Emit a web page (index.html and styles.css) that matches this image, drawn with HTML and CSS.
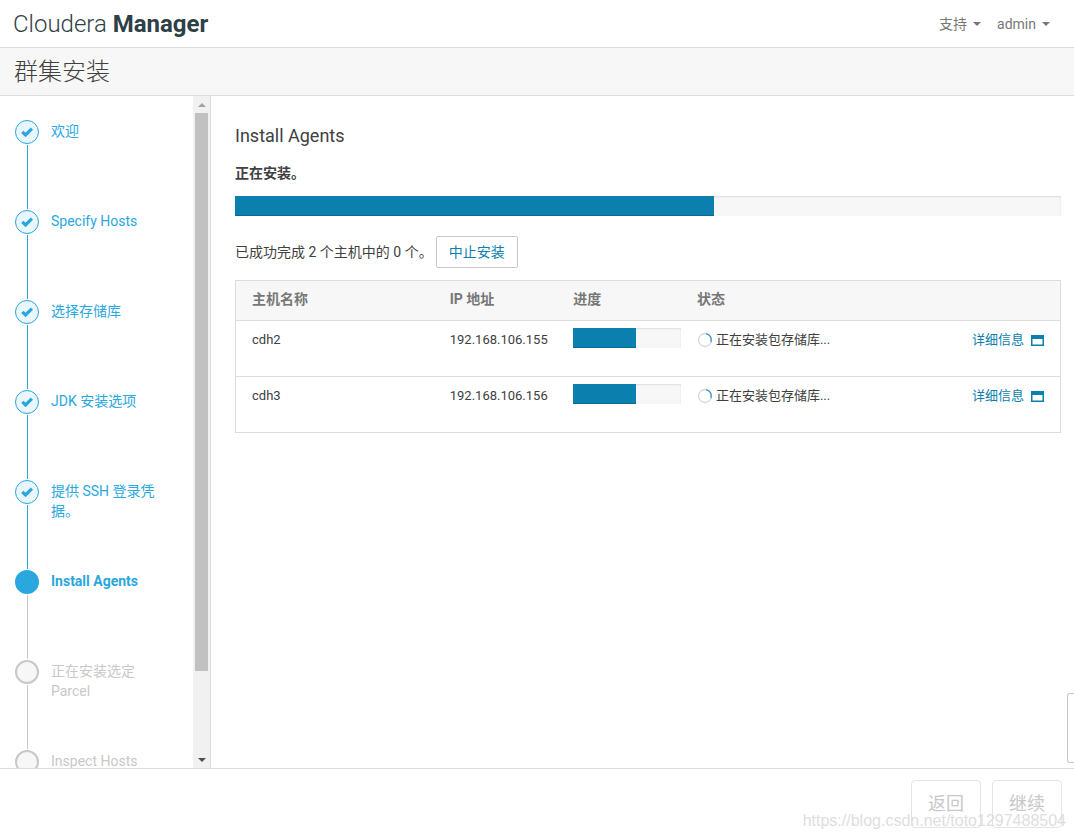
FILE: index.html
```html
<!DOCTYPE html>
<html lang="zh-CN">
<head>
<meta charset="utf-8">
<title>群集安装 - Cloudera Manager</title>
<link rel="stylesheet" href="styles.css">
</head>
<body>
<svg class="defs" aria-hidden="true">
  <symbol id="check" viewBox="0 0 12 10"><path d="M1.300 4.800 4.600 8 10.900 1.700" fill="none" stroke="currentColor" stroke-width="3.200"/></symbol>
  <symbol id="window" viewBox="0 0 13 11"><path d="M0 0h13v11H0zM1.500 4v5.500h10V4z" fill="currentColor" fill-rule="evenodd"/></symbol>
  <symbol id="spinner" viewBox="0 0 16 16"><circle cx="8" cy="8" r="6.500" fill="none" stroke="#d8d8d8" stroke-width="1.300"/><path d="M9 1.600A6.500 6.500 0 0 1 14 10" fill="none" stroke="#3c9abf" stroke-width="1.300"/></symbol>
</svg>
<header class="topbar">
  <a class="brand" href="#">Cloudera <b>Manager</b></a>
  <nav class="menus">
    <button class="menu" type="button">支持<span class="caret"></span></button>
    <button class="menu" type="button">admin<span class="caret"></span></button>
  </nav>
</header>
<div class="titlebar"><h1>群集安装</h1></div>
<div class="body">
  <aside class="sidebar">
    <ol class="steps">
      <li class="step done"><span class="dot"><svg><use href="#check"/></svg></span><a href="#">欢迎</a></li>
      <li class="step done"><span class="dot"><svg><use href="#check"/></svg></span><a href="#">Specify Hosts</a></li>
      <li class="step done"><span class="dot"><svg><use href="#check"/></svg></span><a href="#">选择存储库</a></li>
      <li class="step done"><span class="dot"><svg><use href="#check"/></svg></span><a href="#">JDK 安装选项</a></li>
      <li class="step done"><span class="dot"><svg><use href="#check"/></svg></span><a href="#">提供 SSH 登录凭据。</a></li>
      <li class="step current"><span class="dot"></span><span>Install Agents</span></li>
      <li class="step"><span class="dot"></span><span>正在安装选定 Parcel</span></li>
      <li class="step"><span class="dot"></span><span>Inspect Hosts</span></li>
    </ol>
    <div class="scrollbar" aria-hidden="true">
      <span class="arrow up"></span>
      <div class="track"><div class="thumb"></div></div>
      <span class="arrow down"></span>
    </div>
  </aside>
  <main class="content">
    <h2>Install Agents</h2>
    <h3>正在安装。</h3>
    <div class="progress"><div class="bar" style="width:58%"></div></div>
    <div class="summary"><span>已成功完成 2 个主机中的 0 个。</span><button class="btn" type="button">中止安装</button></div>
    <table class="hosts">
      <thead>
        <tr><th class="host">主机名称</th><th class="ip">IP 地址</th><th class="prog">进度</th><th>状态</th><th></th></tr>
      </thead>
      <tbody>
        <tr>
          <td>cdh2</td><td>192.168.106.155</td>
          <td class="meter"><div class="progress"><div class="bar" style="width:58%"></div></div></td>
          <td><span class="status"><svg><use href="#spinner"/></svg>正在安装包存储库...</span></td>
          <td class="more"><a href="#">详细信息<svg><use href="#window"/></svg></a></td>
        </tr>
        <tr>
          <td>cdh3</td><td>192.168.106.156</td>
          <td class="meter"><div class="progress"><div class="bar" style="width:58%"></div></div></td>
          <td><span class="status"><svg><use href="#spinner"/></svg>正在安装包存储库...</span></td>
          <td class="more"><a href="#">详细信息<svg><use href="#window"/></svg></a></td>
        </tr>
      </tbody>
    </table>
  </main>
  <div class="drawer"></div>
</div>
<footer class="footer">
  <button class="nav-btn" type="button" disabled>返回</button>
  <button class="nav-btn" type="button" disabled>继续</button>
  <span class="watermark">https://blog.csdn.net/toto1297488504</span>
</footer>
</body>
</html>
```

FILE: styles.css
```css
* { box-sizing: border-box; }

body {
  margin: 0;
  height: 100vh;
  display: flex;
  flex-direction: column;
  overflow: hidden;
  background: #fff;
  color: #404040;
  font: 14px/20px Roboto, "Noto Sans CJK SC", sans-serif;
}

button { font: inherit; color: inherit; }
a { color: #0b7fad; text-decoration: none; }
h1, h2, h3 { margin: 0; }
.defs { display: none; }

.topbar {
  flex: none;
  height: 48px;
  padding: 0 24px 0 13px;
  display: flex;
  align-items: center;
  justify-content: space-between;
  border-bottom: 1px solid #dcdcdc;
}
.brand { color: #2f3f46; font-size: 24px; line-height: 48px; font-weight: 300; }
.brand b { font-weight: 700; }
.menus { display: flex; gap: 16px; }
.menu {
  display: flex;
  align-items: center;
  gap: 6px;
  padding: 0;
  border: 0;
  background: none;
  color: #777;
}
.caret {
  border: 4px solid transparent;
  border-top-color: #777;
  border-bottom: 0;
}

.titlebar {
  flex: none;
  height: 48px;
  padding: 0 14px;
  background: #f7f7f7;
  border-bottom: 1px solid #dcdcdc;
}
.titlebar h1 { font-size: 24px; line-height: 48px; font-weight: 300; }

.body { flex: 1; min-height: 0; display: flex; position: relative; }

.sidebar {
  flex: none;
  width: 211px;
  display: flex;
  border-right: 1px solid #dcdcdc;
}
.steps {
  flex: 1;
  margin: 0;
  padding: 24px 24px 0 15px;
  list-style: none;
  overflow: hidden;
}
.step {
  height: 90px;
  display: grid;
  grid-template-columns: 24px 1fr;
  grid-template-rows: 24px 1fr;
  column-gap: 12px;
  color: #c8c8c8;
}
.step a { color: inherit; }
.step > :nth-child(2) { grid-row: 1 / 3; padding-top: 1px; }
.step::after {
  content: "";
  grid-area: 2 / 1;
  width: 1px;
  margin: 1px 0 1px 12px;
  background: #c8c8c8;
}
.step.done { color: #29a7de; }
.step.done::after { background: #29a7de; }
.step.current { color: #29a7de; font-weight: 700; }
.dot {
  grid-area: 1 / 1;
  height: 24px;
  display: flex;
  align-items: center;
  justify-content: center;
  border: 2px solid #c8c8c8;
  border-radius: 50%;
  background: #f7f7f7;
}
.done .dot { border: 1px solid #29a7de; background: #e9f6fc; }
.current .dot { border-color: #29a7de; background: #29a7de; }
.dot svg { width: 12px; height: 10px; }

.scrollbar {
  flex: none;
  width: 17px;
  display: flex;
  flex-direction: column;
  align-items: center;
  background: #f1f1f1;
}
.arrow { height: 17px; display: flex; align-items: center; }
.arrow::before { content: ""; border: 4px solid transparent; }
.arrow.up::before { border-top: 0; border-bottom-color: #a3a3a3; }
.arrow.down::before { border-bottom: 0; border-top-color: #505050; }
.track { flex: 1; width: 13px; }
.thumb { height: 87.500%; background: #c1c1c1; }

.content { flex: 1; min-width: 0; padding: 28px 13px 0 24px; }
h2 { font-size: 18px; line-height: 24px; font-weight: 400; }
h3 { margin: 15px 0 13px; font-size: 14px; line-height: 20px; font-weight: 700; }

.progress {
  height: 20px;
  background: #f7f7f7;
  box-shadow: inset 0 1px 2px #dcdcdc;
}
.bar { height: 100%; background: #0b7fad; box-shadow: inset 0 -1px #096a91; }

.summary { display: flex; align-items: center; gap: 3px; margin: 20px 0 12px; }
.btn {
  height: 32px;
  padding: 0 12px;
  border: 1px solid #c8c8c8;
  border-radius: 2px;
  background: #fff;
  color: #0b7fad;
}

.hosts {
  width: 100%;
  table-layout: fixed;
  border: 1px solid #dcdcdc;
  border-spacing: 0;
  font-size: 13px;
}
.hosts th {
  height: 39px;
  padding: 0 0 3px 16px;
  background: #f7f7f7;
  color: #777;
  font-size: 14px;
  text-align: left;
}
.host { width: 24%; }
.ip, .prog { width: 15%; }
.hosts td {
  height: 56px;
  padding: 8px 0 0 16px;
  border-top: 1px solid #dcdcdc;
  vertical-align: top;
  line-height: 22px;
}
.hosts .meter { padding-top: 7px; }
.status { display: flex; align-items: center; gap: 3px; }
.status svg { width: 16px; height: 16px; }
.hosts .more { padding-right: 16px; }
.more a { display: flex; align-items: center; justify-content: flex-end; gap: 7px; }
.more svg { width: 13px; height: 11px; }

.drawer {
  position: absolute;
  right: 0;
  bottom: 5px;
  width: 7px;
  height: 70px;
  border: 1px solid #c8c8c8;
  border-right: 0;
  border-radius: 3px 0 0 3px;
}

.footer {
  flex: none;
  position: relative;
  height: 71px;
  padding: 11px 12px;
  display: flex;
  justify-content: flex-end;
  gap: 11px;
  border-top: 1px solid #dcdcdc;
}
.nav-btn {
  height: 48px;
  padding: 0 16px;
  border: 1px solid #e4e4e4;
  border-radius: 4px;
  background: #fff;
  color: #c8c8c8;
  font-size: 18px;
}
.watermark {
  position: absolute;
  right: 8px;
  bottom: 8px;
  color: #dedede;
  font: 16px/20px "Liberation Sans", sans-serif;
}
```
